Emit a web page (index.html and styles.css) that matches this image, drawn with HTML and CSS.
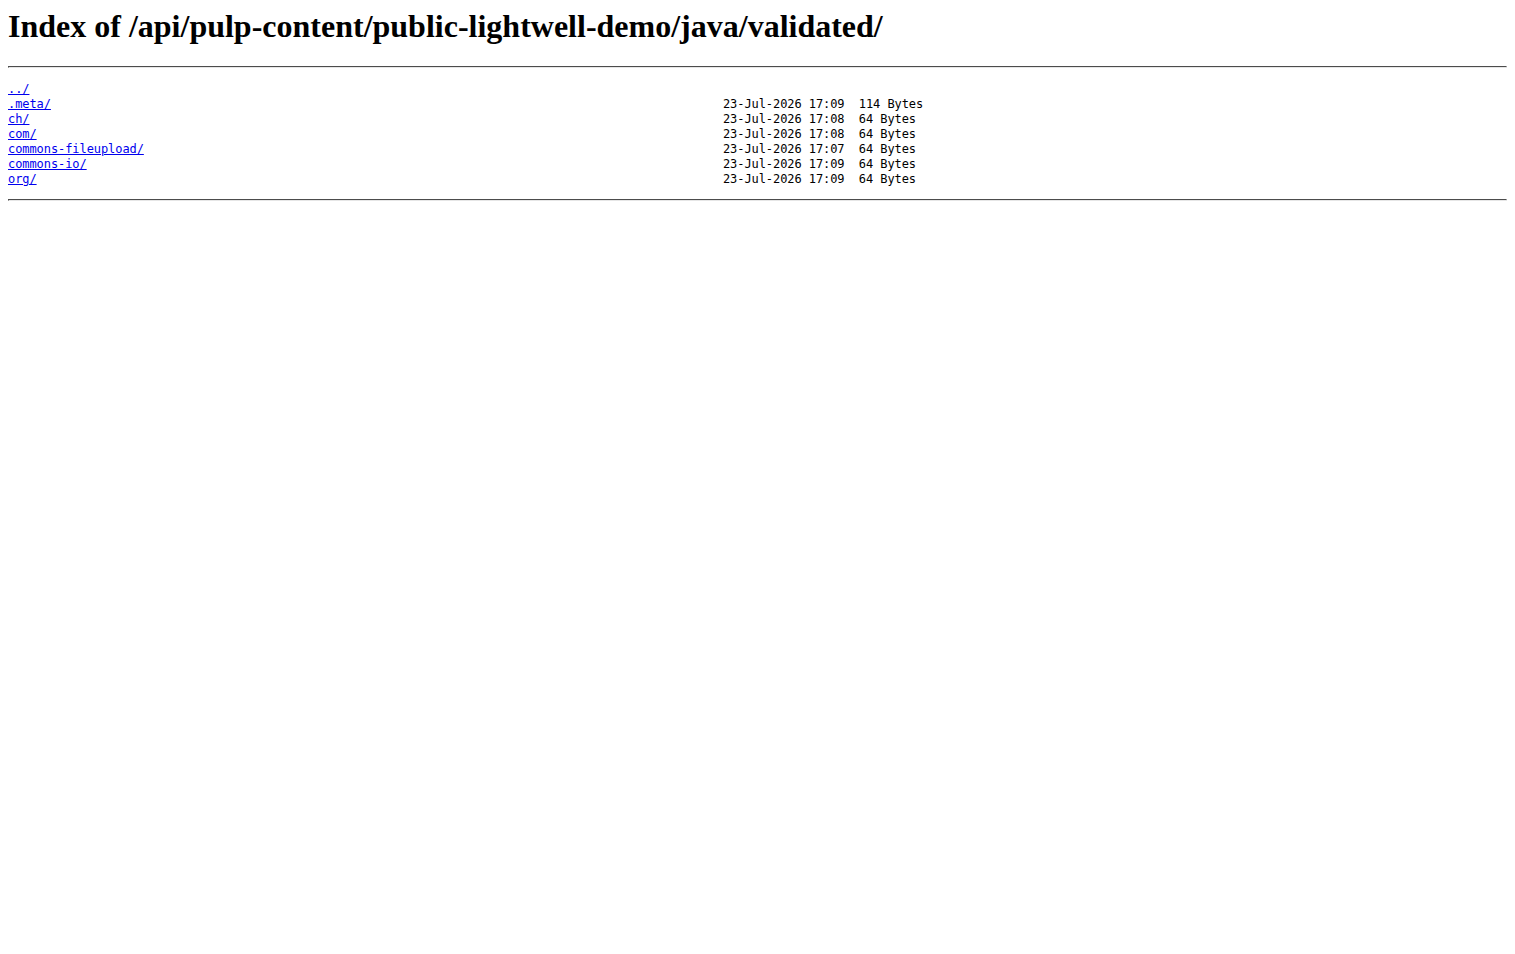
FILE: index.html
```html
<!DOCTYPE html>
<html>
<head>
<meta charset="utf-8">
<title>Index of /api/pulp-content/public-lightwell-demo/java/validated/</title>
<link rel="stylesheet" href="styles.css">
</head>
<body class="page">
<h1 class="title">Index of /api/pulp-content/public-lightwell-demo/java/validated/</h1>
<hr class="rule"><pre class="listing"><a href="../">../</a>
<a href=".meta/">.meta/</a>                                                                                              23-Jul-2026 17:09  114 Bytes
<a href="ch/">ch/</a>                                                                                                 23-Jul-2026 17:08  64 Bytes
<a href="com/">com/</a>                                                                                                23-Jul-2026 17:08  64 Bytes
<a href="commons-fileupload/">commons-fileupload/</a>                                                                                 23-Jul-2026 17:07  64 Bytes
<a href="commons-io/">commons-io/</a>                                                                                         23-Jul-2026 17:09  64 Bytes
<a href="org/">org/</a>                                                                                                23-Jul-2026 17:09  64 Bytes
</pre><hr class="rule">
</body>
</html>
```
FILE: styles.css
```css
.page {
  margin: 8px;
  background: #fff;
  color: #000;
  font-family: "Liberation Serif", "Times New Roman", serif;
}
.title {
  font-size: 32px;
  font-weight: bold;
  margin: 0 0 21.44px 0;
}
.rule {
  margin: 8px 0;
  border: 1px inset;
  border-color: #a0a0a0 #e6e6e6 #e6e6e6 #a0a0a0;
  height: 0;
}
.listing {
  font-family: "DejaVu Sans Mono", monospace;
  font-size: 12px;
  letter-spacing: -0.075px;
  line-height: 15px;
  margin: 14px 0 12px 0;
}
.listing a {
  color: #0000ee;
}
```
